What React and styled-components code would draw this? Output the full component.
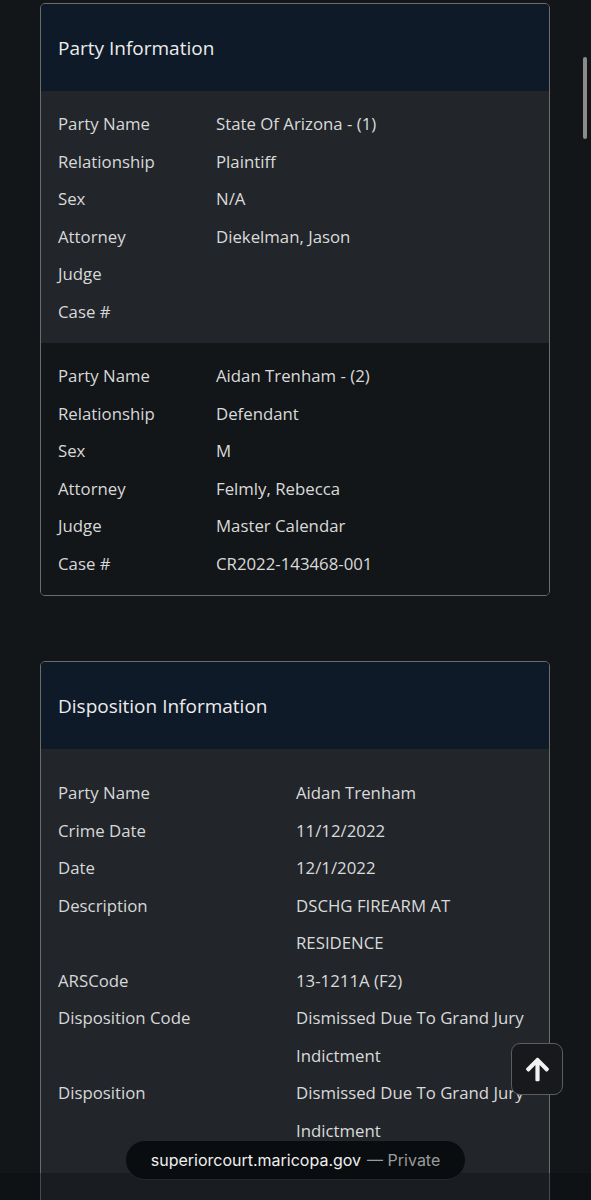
import React from "react";
import styled, { createGlobalStyle } from "styled-components";
import { FaArrowUp } from "react-icons/fa";

const GlobalStyle = createGlobalStyle`
  html, body {
    margin: 0;
    padding: 0;
    background: #131619;
  }
  body {
    font-family: "Open Sans", "Noto Sans", sans-serif;
    color: #dcdcdc;
  }
`;

const Page = styled.main`
  display: flex;
  flex-direction: column;
  gap: 65px;
  padding: 3px 41px 40px 40px;
`;

const Card = styled.section`
  border: 1px solid #6c6c6c;
  border-radius: 5px;
  overflow: hidden;
  background: #22262b;
`;

const CardHeader = styled.header`
  height: 87px;
  display: flex;
  align-items: center;
  padding: 0 17px;
  background: #0f1a29;
  font-size: 19px;
  color: #ececec;
`;

const Block = styled.div`
  background: ${(p) => (p.$dark ? "#131619" : "#22262b")};
  padding: ${(p) => p.$top}px 17px ${(p) => p.$bottom || 13}px;
`;

const Row = styled.div`
  display: grid;
  grid-template-columns: ${(p) => p.$label}px 1fr;
  font-size: 16.8px;
  line-height: 37.5px;
`;

const Label = styled.div`
  color: #d8d8d8;
`;

const Value = styled.div`
  color: #dadada;
`;

const ScrollThumb = styled.div`
  position: fixed;
  left: 583px;
  top: 57px;
  width: 4px;
  height: 82px;
  border-radius: 2px;
  background: #8b8b8b;
`;

const TopButton = styled.button`
  position: fixed;
  left: 511px;
  top: 1043px;
  width: 52px;
  height: 52px;
  border: 1px solid #5b5d60;
  border-radius: 9px;
  background: #17191c;
  color: #f2f2f2;
  display: flex;
  align-items: center;
  justify-content: center;
  padding: 0;
`;

const BottomBar = styled.div`
  position: fixed;
  left: 0;
  right: 0;
  bottom: 0;
  height: 27px;
  background: rgba(10, 12, 14, 0.35);
`;

const UrlPill = styled.div`
  position: fixed;
  left: 125px;
  top: 1140px;
  width: 341px;
  height: 40px;
  box-sizing: border-box;
  border: 1px solid #24272a;
  border-radius: 20px;
  background: #0a0d10;
  display: flex;
  align-items: center;
  justify-content: center;
  gap: 6px;
  font-family: Inter, Roboto, sans-serif;
  font-size: 16px;
`;

const Host = styled.span`
  color: #f0f0f0;
`;

const Muted = styled.span`
  color: #9a9b9d;
`;

const parties = [
  [
    ["Party Name", "State Of Arizona - (1)"],
    ["Relationship", "Plaintiff"],
    ["Sex", "N/A"],
    ["Attorney", "Diekelman, Jason"],
    ["Judge", ""],
    ["Case #", ""],
  ],
  [
    ["Party Name", "Aidan Trenham - (2)"],
    ["Relationship", "Defendant"],
    ["Sex", "M"],
    ["Attorney", "Felmly, Rebecca"],
    ["Judge", "Master Calendar"],
    ["Case #", "CR2022-143468-001"],
  ],
];

const disposition = [
  ["Party Name", "Aidan Trenham"],
  ["Crime Date", "11/12/2022"],
  ["Date", "12/1/2022"],
  ["Description", "DSCHG FIREARM AT RESIDENCE"],
  ["ARSCode", "13-1211A (F2)"],
  ["Disposition Code", "Dismissed Due To Grand Jury Indictment"],
  ["Disposition", "Dismissed Due To Grand Jury Indictment"],
];

const App = () => {
  return (
    <>
      <GlobalStyle />
      <Page>
        <Card>
          <CardHeader>Party Information</CardHeader>
          {parties.map((rows, idx) => (
            <Block key={idx} $dark={idx % 2 === 1} $top={14}>
              {rows.map(([k, v]) => (
                <Row key={k} $label={158}>
                  <Label>{k}</Label>
                  <Value>{v || "\u00a0"}</Value>
                </Row>
              ))}
            </Block>
          ))}
        </Card>
        <Card>
          <CardHeader>Disposition Information</CardHeader>
          <Block $top={25} $bottom={80}>
            {disposition.map(([k, v], i) => (
              <Row key={i} $label={238}>
                <Label>{k}</Label>
                <Value>{v}</Value>
              </Row>
            ))}
          </Block>
        </Card>
      </Page>
      <ScrollThumb />
      <TopButton aria-label="Back to top">
        <FaArrowUp size={27} />
      </TopButton>
      <BottomBar />
      <UrlPill>
        <Host>superiorcourt.maricopa.gov</Host>
        <Muted>— Private</Muted>
      </UrlPill>
    </>
  );
};

export default App;
